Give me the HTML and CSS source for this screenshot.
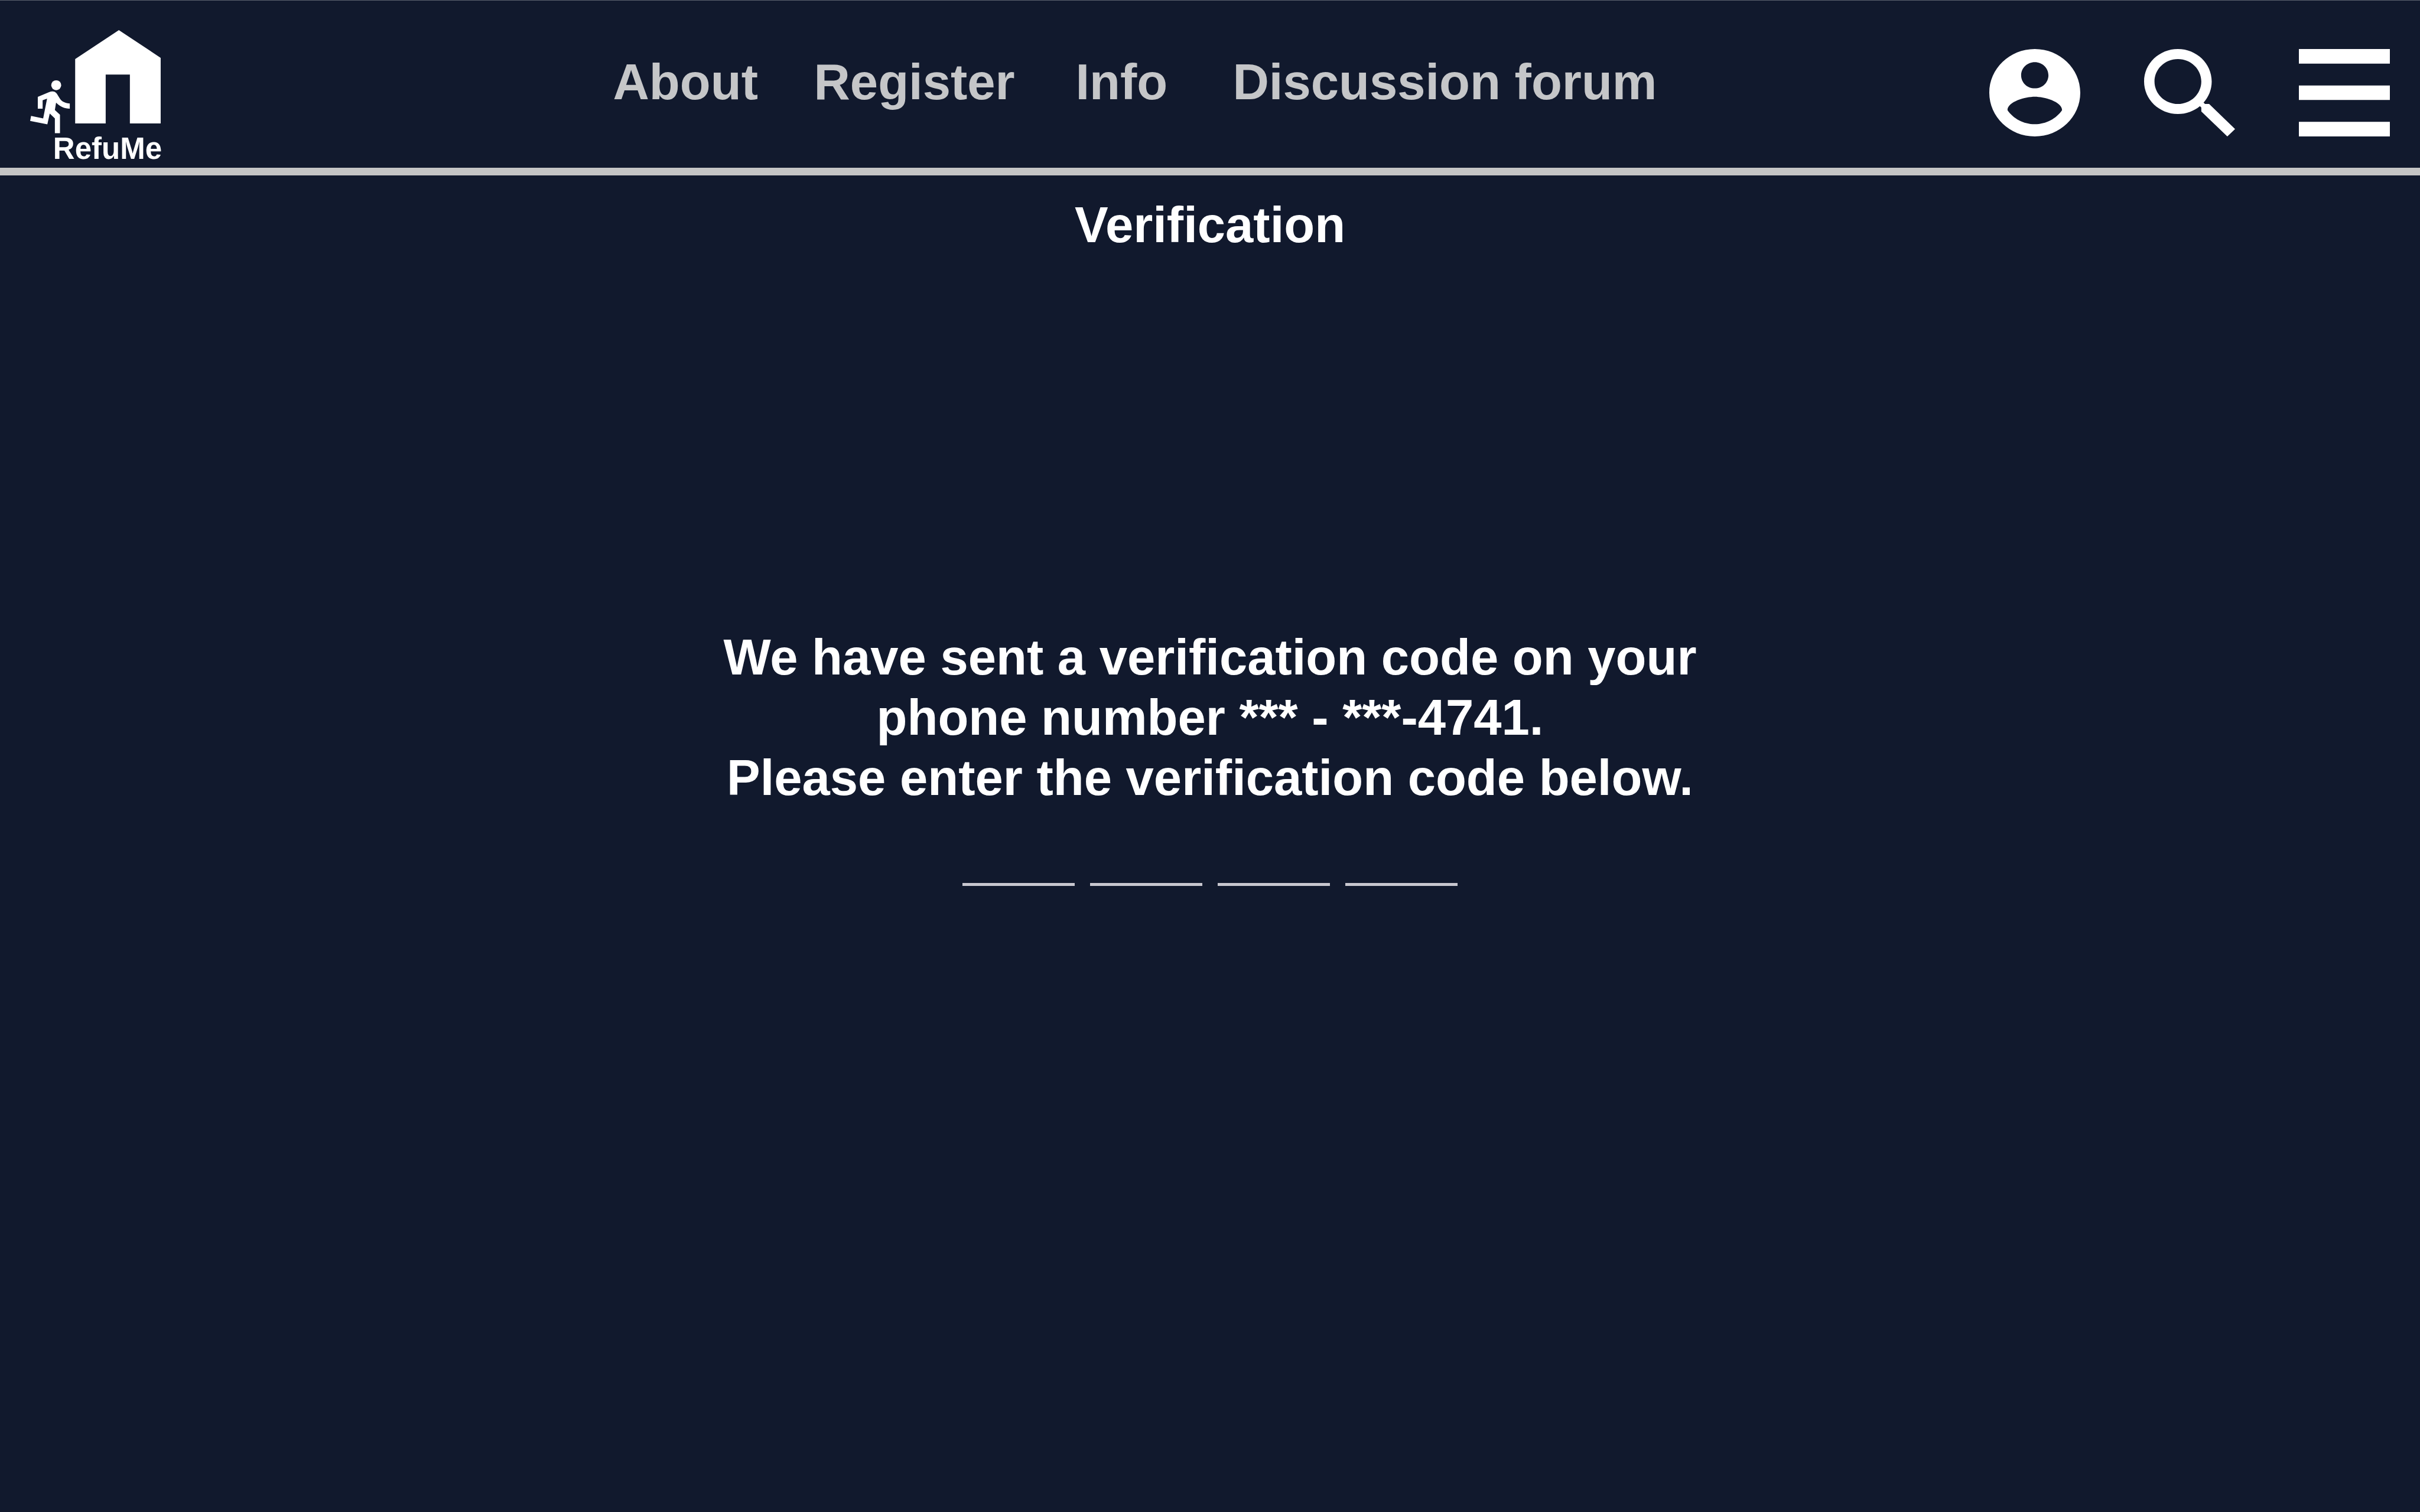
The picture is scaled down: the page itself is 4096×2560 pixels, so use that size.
FILE: index.html
```html
<!DOCTYPE html>
<html lang="en">
<head>
  <meta charset="utf-8">
  <meta name="viewport" content="width=device-width, initial-scale=1">
  <title>RefuMe – Verification</title>
  <link rel="stylesheet" href="styles.css">
</head>
<body>
  <header class="site-header">
    <a class="logo" href="#">
      <svg class="logo-mark" viewBox="225 225 980 769" aria-hidden="true">
        <path d="M885 225L1196 431V919H967V556H787V919H560V440Z"/>
        <circle cx="419" cy="635" r="37"/>
        <path d="M282 722L366 686Q390 678 408 684Q418 690 424 699L445 733C460 757 488 771 520 771V809C480 809 445 792 418 764L409 819L447 855V992H409V882L371 846L353 926L225 901L232 863L322 882L351 735L318 747V809H282Z"/>
      </svg>
      <span class="logo-name">RefuMe</span>
    </a>
    <nav class="site-nav" aria-label="Main">
      <a href="#">About</a>
      <a href="#">Register</a>
      <a href="#">Info</a>
      <a href="#">Discussion forum</a>
    </nav>
    <div class="actions">
      <button class="icon-button" type="button" aria-label="Account">
        <svg viewBox="2 2 20 20" preserveAspectRatio="none" aria-hidden="true"><path d="M12 2C6.48 2 2 6.48 2 12s4.48 10 10 10 10-4.48 10-10S17.52 2 12 2zm0 3c1.66 0 3 1.34 3 3s-1.34 3-3 3-3-1.34-3-3 1.34-3 3-3zm0 14.2c-2.5 0-4.71-1.28-6-3.22.03-1.99 4-3.08 6-3.08 1.99 0 5.97 1.09 6 3.08-1.29 1.94-3.5 3.22-6 3.22z"/></svg>
      </button>
      <button class="icon-button" type="button" aria-label="Search">
        <svg viewBox="3 3 17.49 17.49" preserveAspectRatio="none" aria-hidden="true"><path d="M15.5 14h-.79l-.28-.27C15.41 12.59 16 11.11 16 9.5 16 5.91 13.09 3 9.5 3S3 5.91 3 9.5 5.91 16 9.5 16c1.61 0 3.09-.59 4.23-1.57l.27.28v.79l5 4.99L20.49 19l-4.99-5zm-6 0C7.01 14 5 11.99 5 9.5S7.01 5 9.5 5 14 7.01 14 9.5 11.99 14 9.5 14z"/></svg>
      </button>
      <button class="icon-button" type="button" aria-label="Menu">
        <svg viewBox="3 6 18 12" preserveAspectRatio="none" aria-hidden="true"><path d="M3 18h18v-2H3v2zm0-5h18v-2H3v2zm0-7v2h18V6H3z"/></svg>
      </button>
    </div>
  </header>
  <main class="verification">
    <h1 class="title">Verification</h1>
    <form class="code-form">
      <p class="message" id="message">We have sent a verification code on your<br>phone number *** - ***-4741.<br>Please enter the verification code below.</p>
      <div class="code" role="group" aria-labelledby="message">
        <input class="digit" type="text" inputmode="numeric" maxlength="1" aria-label="Digit 1">
        <input class="digit" type="text" inputmode="numeric" maxlength="1" aria-label="Digit 2">
        <input class="digit" type="text" inputmode="numeric" maxlength="1" aria-label="Digit 3">
        <input class="digit" type="text" inputmode="numeric" maxlength="1" aria-label="Digit 4">
      </div>
    </form>
  </main>
</body>
</html>
```
FILE: styles.css
```css
*,
*::before,
*::after {
  box-sizing: border-box;
}

body {
  margin: 0;
  min-height: 100vh;
  background: #11192d;
  color: #fff;
  font: bold 85px/102px "Liberation Sans", Arial, sans-serif;
}

.site-header {
  display: grid;
  grid-template-columns: minmax(0, 1037fr) auto minmax(0, 1291fr);
  align-items: start;
  padding: 50px 0 7px;
  border-top: 1px solid #5a606d;
  border-bottom: 13px solid #c5c5c5;
}

/* Logo */
.logo {
  display: flex;
  flex-direction: column;
  align-items: flex-end;
  width: 223px;
  margin-left: 51px;
  color: inherit;
  font-size: 51px;
  line-height: 51px;
  text-decoration: none;
}

.logo-mark {
  display: block;
  width: 223px;
  height: 175px;
  fill: currentColor;
}

/* Navigation */
.site-nav {
  display: grid;
  grid-template-columns: 340px 443px 266px auto;
  padding-top: 37px;
  white-space: nowrap;
}

.site-nav a {
  color: #c5c6c8;
  text-decoration: none;
}

.actions {
  display: flex;
  justify-content: flex-end;
  gap: 108px;
  padding: 32px 51px 0 0;
}

.icon-button {
  width: 154px;
  height: 148px;
  padding: 0;
  border: 0;
  background: none;
  color: inherit;
  cursor: pointer;
}

.icon-button svg {
  display: block;
  width: 100%;
  height: 100%;
  fill: currentColor;
}

/* Verification */
.verification {
  display: flex;
  flex-direction: column;
  align-items: center;
  gap: 630px;
  padding-top: 33px;
  text-align: center;
}

.title,
.message {
  margin: 0;
  font-size: inherit;
}

.code-form {
  display: flex;
  flex-direction: column;
  align-items: center;
  gap: 30px;
}

.code {
  display: flex;
  gap: 26px;
}

.digit {
  width: 190px;
  height: 102px;
  padding: 0;
  border: 0;
  border-bottom: 5px solid #c8c7cf;
  border-radius: 0;
  outline: 0;
  background: none;
  color: inherit;
  font: inherit;
  text-align: center;
}
```
